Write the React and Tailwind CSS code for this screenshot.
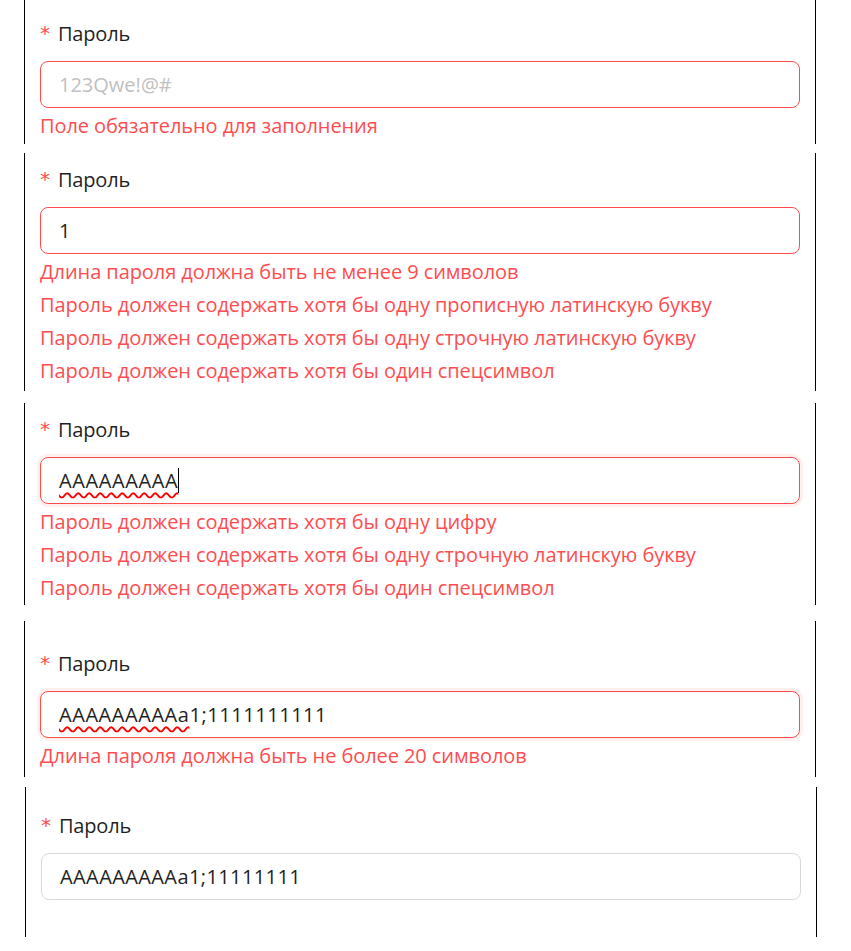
import React from "react";

const FONT = { fontFamily: '"Open Sans", "Noto Sans", sans-serif' };

function Label() {
  return (
    <div className="flex items-center h-[34px] text-[20px] leading-[34px] text-[#1f1f1f]">
      <span className="text-[#ff4d4f] text-[20px] w-[18px] leading-none -mt-[2px]" style={{ fontFamily: '"DejaVu Sans", sans-serif' }}>*</span>
      <span className="tracking-[-0.2px]">Пароль</span>
    </div>
  );
}

function Input({ children, error, focus }) {
  const border = error ? "border-[#ff4d4f]" : "border-[#d9d9d9]";
  const shadow = focus ? "shadow-[0_0_0_3px_rgba(255,38,5,0.07)]" : "";
  return (
    <div className={`mt-[10px] h-[47px] w-[760px] rounded-[8px] border ${border} ${shadow} flex items-center pl-[18px] text-[20px] text-[#1f1f1f] bg-white`}>
      {children}
    </div>
  );
}

function Errors({ items }) {
  return (
    <div className="flex flex-col pt-[1px]">
      {items.map((t, i) => (
        <div key={i} className="h-[33px] leading-[33px] text-[20px] text-[#ff4d4f] tracking-[-0.08px]">{t}</div>
      ))}
    </div>
  );
}

const Wavy = ({ children }) => (
  <span className="underline decoration-wavy decoration-[#ff0000] decoration-[1.5px] underline-offset-[4px]">{children}</span>
);

export default function App() {
  return (
    <div className="w-[851px] h-[951px] bg-white flex flex-col" style={FONT}>
      <div className="ml-[24px] w-[792px] border-x border-black pl-[15px] pt-[17px] pb-[2px]">
        <Label />
        <Input error>
          <span className="text-[#bfbfbf]">123Qwe!@#</span>
        </Input>
        <Errors items={["Поле обязательно для заполнения"]} />
      </div>

      <div className="mt-[9px] ml-[24px] w-[792px] border-x border-black pl-[15px] pt-[10px] pb-[4px]">
        <Label />
        <Input error>
          <span className="tracking-[0.5px]">1</span>
        </Input>
        <Errors
          items={[
            "Длина пароля должна быть не менее 9 символов",
            "Пароль должен содержать хотя бы одну прописную латинскую букву",
            "Пароль должен содержать хотя бы одну строчную латинскую букву",
            "Пароль должен содержать хотя бы один спецсимвол",
          ]}
        />
      </div>

      <div className="mt-[12px] ml-[24px] w-[792px] border-x border-black pl-[15px] pt-[10px] pb-[1px]">
        <Label />
        <Input error focus>
          <span className="tracking-[0.6px]"><Wavy>AAAAAAAAA</Wavy></span>
          <span className="inline-block w-px h-[25px] bg-black" />
        </Input>
        <Errors
          items={[
            "Пароль должен содержать хотя бы одну цифру",
            "Пароль должен содержать хотя бы одну строчную латинскую букву",
            "Пароль должен содержать хотя бы один спецсимвол",
          ]}
        />
      </div>

      <div className="mt-[16px] ml-[24px] w-[792px] border-x border-black pl-[15px] pt-[26px] pb-[5px]">
        <Label />
        <Input error focus>
          <span className="tracking-[0.55px]">
            <Wavy>AAAAAAAAAa</Wavy>
            1;1111111111
          </span>
        </Input>
        <Errors items={["Длина пароля должна быть не более 20 символов"]} />
      </div>

      <div className="mt-[10px] ml-[25px] w-[792px] border-x border-black pl-[15px] pt-[22px] pb-[37px]">
        <Label />
        <Input>
          <span className="tracking-[0.4px]">AAAAAAAAAa1;11111111</span>
        </Input>
      </div>
    </div>
  );
}
